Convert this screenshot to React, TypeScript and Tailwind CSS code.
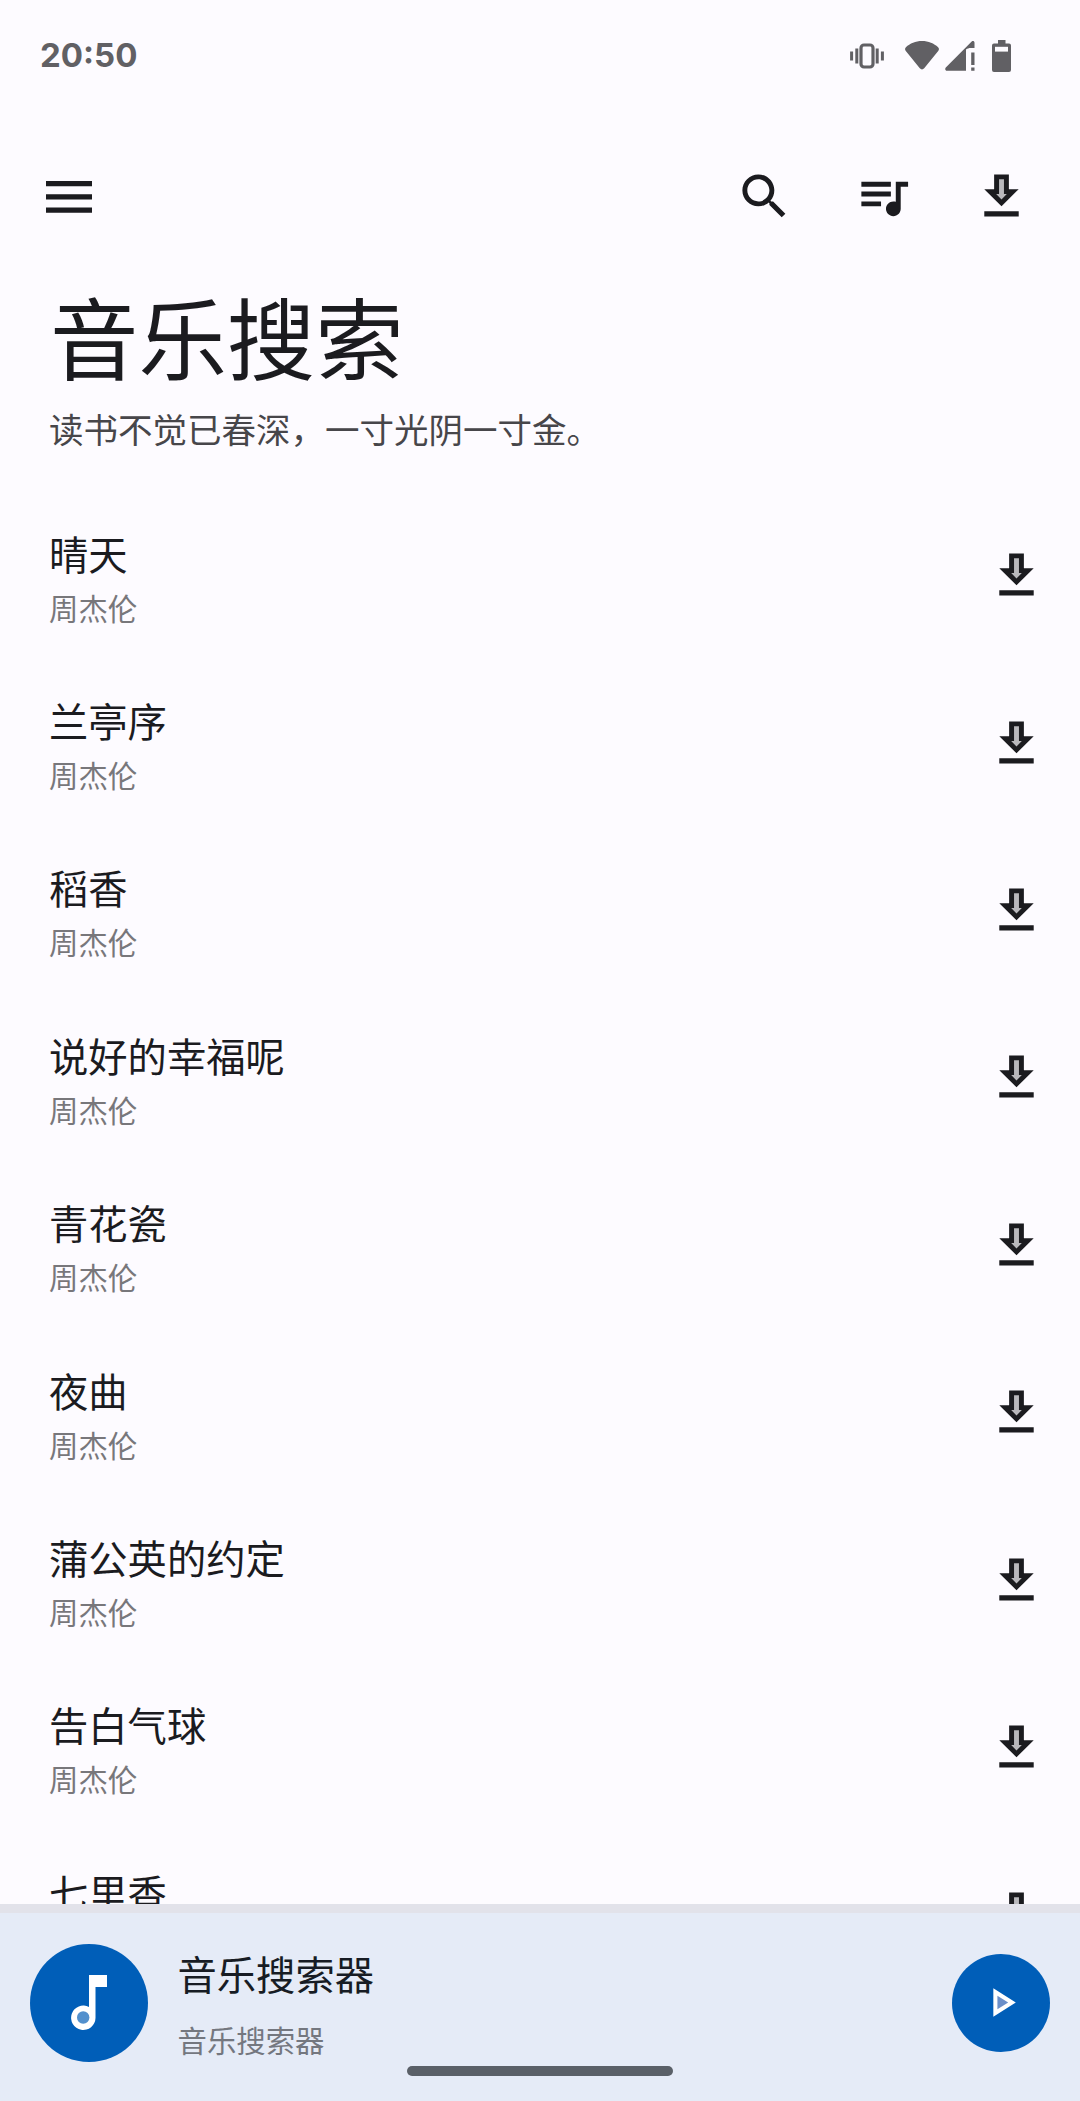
import React from "react";

interface Song {
  title: string;
  artist: string;
}

const songs: Song[] = [
  { title: "晴天", artist: "周杰伦" },
  { title: "兰亭序", artist: "周杰伦" },
  { title: "稻香", artist: "周杰伦" },
  { title: "说好的幸福呢", artist: "周杰伦" },
  { title: "青花瓷", artist: "周杰伦" },
  { title: "夜曲", artist: "周杰伦" },
  { title: "蒲公英的约定", artist: "周杰伦" },
  { title: "告白气球", artist: "周杰伦" },
  { title: "七里香", artist: "周杰伦" },
];

const DownloadIcon = () => (
  <svg viewBox="0 0 24 24" className="size-[59px] shrink-0">
    <path d="M10 4h4v7h.8L12 14 9.200 11h.8z" fill="#b9b8bc" />
    <path
      d="M19 9h-4V3H9v6H5l7 7 7-7zm-8 2V5h2v6h1.170L12 13.170 9.830 11H11zm-6 7h14v2.100H5z"
      fill="#1b1b1f"
    />
  </svg>
);

const StatusBar = () => (
  <div className="flex h-[111px] items-center justify-between pl-[40px] pr-[69px] text-[#616064]">
    <span className="font-['Inter',sans-serif] text-[33px] font-bold leading-none">
      20:50
    </span>
    <div className="flex items-center">
      <svg viewBox="0 0 34 26" className="mr-[21px] h-[26px] w-[34px]" fill="none" stroke="currentColor">
        <rect x="11" y="2" width="12" height="22" rx="3" strokeWidth="3.2" />
        <path d="M6.800 5.500v15M27.200 5.500v15" strokeWidth="3" />
        <path d="M1.600 8.500v9M32.400 8.500v9" strokeWidth="3" />
      </svg>
      <svg viewBox="0 0 34 29" className="mr-[6px] h-[29px] w-[34px]" fill="currentColor">
        <path d="M17 0C10.500 0 5 2.500.9 6.200-.2 7.200-.2 8.600.6 9.700L14.800 27.300c1.200 1.500 3.200 1.500 4.400 0L33.400 9.700c.8-1.100.8-2.500-.3-3.500C29 2.500 23.500 0 17 0z" />
      </svg>
      <svg viewBox="0 0 30 30" className="mr-[17px] h-[30px] w-[30px]" fill="currentColor">
        <path d="M29.500 7V1.800c0-1.500-1.600-2.300-2.800-1.200L.8 26.500C-.4 27.800.4 29.800 2 29.800h19V8.500c1.500-1 2.500-1.500 5-1.500z" />
        <path d="M26.200 11.500h3.300v12.500h-3.300zM26.200 26.600h3.300v3.200h-3.300z" />
      </svg>
      <svg viewBox="0 0 19 32" className="h-[32px] w-[19px]">
        <path
          d="M6 0h7.500v3.500H17a2 2 0 0 1 2 2V30a2 2 0 0 1-2 2H2a2 2 0 0 1-2-2V5.500a2 2 0 0 1 2-2h4z"
          fill="currentColor"
        />
        <path d="M3 6.800h13v4.800H3z" fill="#fdfbff" />
      </svg>
    </div>
  </div>
);

const TopBar = () => (
  <header className="flex h-[171px] items-center justify-between pl-[46px] pr-[49px]">
    <button>
      <svg viewBox="0 0 46 32" className="h-[32px] w-[46px]" fill="#1b1b1f">
        <path d="M0 0h46v5.300H0zM0 13.300h46v5.300H0zM0 26.500h46v5.300H0z" />
      </svg>
    </button>
    <div className="flex items-center gap-[59px]">
      <svg viewBox="0 0 24 24" className="mr-px size-[59px]" fill="#1b1b1f">
        <path d="M15.500 14h-.79l-.28-.27C15.410 12.590 16 11.110 16 9.500 16 5.910 13.090 3 9.500 3S3 5.910 3 9.500 5.910 16 9.500 16c1.610 0 3.090-.59 4.230-1.570l.27.28v.79l5 4.990L20.490 19l-4.990-5zm-6 0C7.010 14 5 11.990 5 9.500S7.010 5 9.500 5 14 7.010 14 9.500 11.990 14 9.500 14z" />
      </svg>
      <svg viewBox="0 0 24 24" className="size-[59px]" fill="#1b1b1f">
        <path d="M15 6H3v2h12V6zm0 4H3v2h12v-2zM3 16h8v-2H3v2zM17 6v8.180c-.31-.11-.65-.18-1-.18-1.660 0-3 1.340-3 3s1.340 3 3 3 3-1.340 3-3V8h3V6h-5z" />
      </svg>
      <DownloadIcon />
    </div>
  </header>
);

const SongRow = ({ title, artist }: Song) => (
  <li className="flex h-[167.4px] shrink-0 items-center justify-between pl-[49px] pr-[34.5px]">
    <div className="pt-[3px]">
      <p className="text-[39.3px] leading-[58px] text-[#1b1b1f]">{title}</p>
      <p className="mt-px text-[29.4px] leading-[48px] text-[#78777b]">{artist}</p>
    </div>
    <DownloadIcon />
  </li>
);

const PlayerBar = () => (
  <footer className="relative flex h-[197px] shrink-0 items-center border-t-[9px] border-[#e2e2ea] bg-[#e5ebf7] pb-[9px] pl-[29.5px] pr-[30px]">
    <div className="flex size-[118px] items-center justify-center rounded-full bg-[#005eb8]">
      <svg viewBox="0 0 36 55" className="h-[55px] w-[36px]">
        <path d="M18 0h18v12H24.500v31A12.200 12.200 0 1 1 18 32z" fill="#fff" />
        <circle cx="12.200" cy="42.500" r="6.200" fill="#5290cd" />
      </svg>
    </div>
    <div className="ml-[30px] flex-1">
      <p className="text-[39.3px] leading-[58px] text-[#171c24]">音乐搜索器</p>
      <p className="mt-[15px] text-[29.4px] leading-[44px] text-[#74777f]">音乐搜索器</p>
    </div>
    <button className="flex size-[98px] items-center justify-center rounded-full bg-[#005eb8]">
      <svg viewBox="0 0 24 24" className="size-[49px]">
        <path d="M9 7.500v9l7-4.500z" fill="#6b8fc9" />
        <path d="M10 8.640L15.270 12 10 15.360V8.640M8 5v14l11-7L8 5z" fill="#fff" />
      </svg>
    </button>
    <div className="absolute bottom-[25px] left-[407px] h-[10px] w-[266px] rounded-full bg-[#5a6068]" />
  </footer>
);

const App = () => {
  return (
    <div
      lang="zh-CN"
      className="flex h-[2101px] w-[1080px] flex-col overflow-hidden bg-[#fdfbff] font-['Noto_Sans_CJK_SC',sans-serif]"
    >
      <StatusBar />
      <TopBar />
      <div className="h-[210px] shrink-0 pl-[49px]">
        <h1 className="pl-px text-[88.4px] leading-[104px] text-[#1b1b1f]">音乐搜索</h1>
        <p className="mt-[17px] text-[34.5px] leading-[50px] text-[#47464a]">
          读书不觉已春深，一寸光阴一寸金。
        </p>
      </div>
      <ul className="flex min-h-0 flex-1 flex-col overflow-hidden">
        {songs.map((song) => (
          <SongRow key={song.title} title={song.title} artist={song.artist} />
        ))}
      </ul>
      <PlayerBar />
    </div>
  );
};

export default App;
